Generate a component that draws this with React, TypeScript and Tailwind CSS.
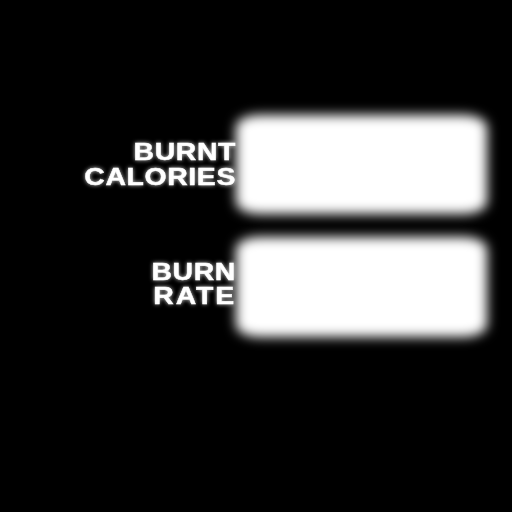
const rows = [
  { lines: ["BURNT", "CALORIES"], height: "h-[99px]", label: "pb-0" },
  { lines: ["BURN", "RATE"], height: "h-[100px]", label: "pb-[6px]" },
];

export default function App() {
  return (
    <div className="w-[512px] h-[512px] bg-black overflow-hidden pt-[115px] pl-[80px]">
      <div className="flex flex-col gap-[23px]">
        {rows.map((row) => (
          <div key={row.lines[0]} className="flex items-center">
            <div className={`w-[156px] ${row.label} origin-right scale-x-[1.235] text-right text-white font-['Liberation_Sans',sans-serif] font-bold text-[23px] leading-[24.5px] tracking-[0.5px] [-webkit-text-stroke:0.4px_white] [text-shadow:0_0_4px_rgba(255,255,255,0.9)]`}>
              {row.lines.map((line) => (
                <div key={line} className={line === "RATE" ? "tracking-[1.5px]" : ""}>
                  {line}
                </div>
              ))}
            </div>
            <div className={`w-[251px] ${row.height} bg-white rounded-[24px/12px] blur-[6px]`} />
          </div>
        ))}
      </div>
    </div>
  );
}
